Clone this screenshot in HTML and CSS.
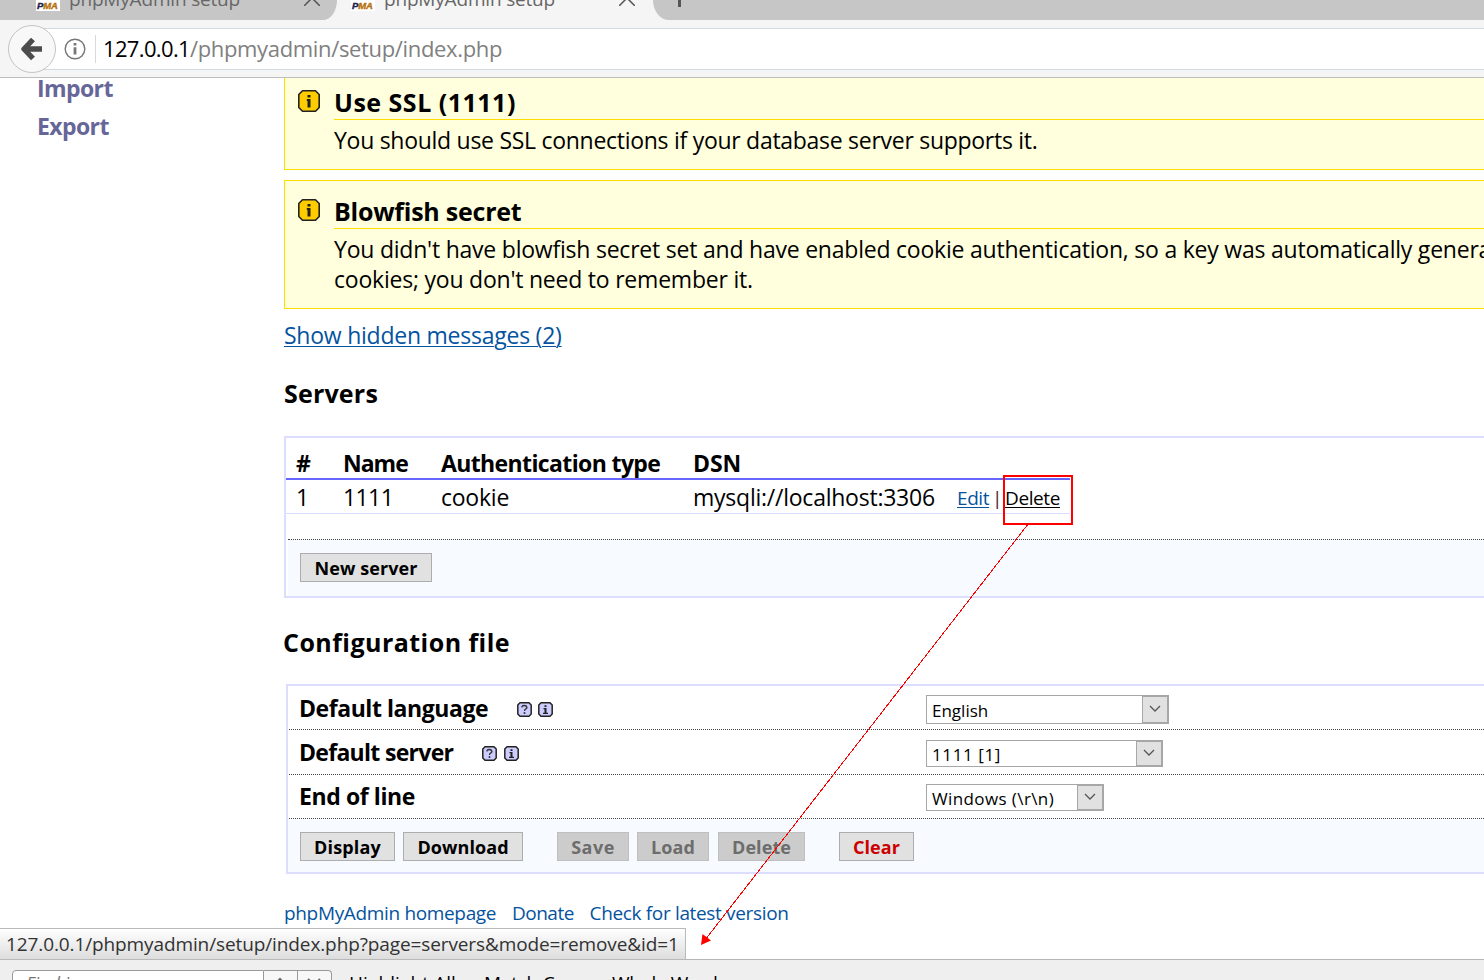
FILE: index.html
```
<!DOCTYPE html>
<html lang="en">
<head>
<meta charset="utf-8">
<title>phpMyAdmin setup</title>
<link rel="stylesheet" href="styles.css">
</head>
<body>
<svg class="defs" width="0" height="0">
  <symbol id="notice" viewBox="0 0 22 22">
    <path d="M4.500 .8h13L21.200 4.500v13L17.500 21.200h-13L.8 17.500v-13z" fill="#fc0" stroke="#222" stroke-width="1.600" stroke-linejoin="round"/>
    <path d="M9.500 5h3v2.500h-3zM8.800 9h3.700v8.500h-3V11h-.7z" fill="#222"/>
  </symbol>
  <symbol id="help" viewBox="0 0 15 15">
    <path d="M3 .8h9L14.200 3v9L12 14.200H3L.8 12V3z" fill="#ccf" stroke="#222" stroke-width="1.500" stroke-linejoin="round"/>
    <path d="M5 5.500V4.500Q5.500 3.500 7.500 3.500T10 5.500Q10 6.500 8.500 7.200Q7.500 7.700 7.500 9" fill="none" stroke="#333" stroke-width="1.300"/>
    <path d="M6.700 10.200h1.600v1.700H6.700z" fill="#222"/>
  </symbol>
  <symbol id="info" viewBox="0 0 15 15">
    <path d="M3 .8h9L14.200 3v9L12 14.200H3L.8 12V3z" fill="#ccf" stroke="#222" stroke-width="1.500" stroke-linejoin="round"/>
    <path d="M6.500 3.200h2v1.700h-2zM5.500 6h3v4.700h1.500V12H5v-1.300h1.500V7.200h-1z" fill="#222"/>
  </symbol>
  <symbol id="close" viewBox="0 0 16 16"><path d="M0 0L16 16M16 0L0 16" stroke="#555" stroke-width="1.500" fill="none"/></symbol>
</svg>

<div class="tabs">
  <div class="tab tab-first">
    <span class="favicon"><i>P</i><b>MA</b></span><span class="tab-title">phpMyAdmin setup</span>
    <svg class="tab-close"><use href="#close"/></svg>
  </div>
  <div class="tab tab-active">
    <span class="favicon"><i>P</i><b>MA</b></span><span class="tab-title">phpMyAdmin setup</span>
    <svg class="tab-close"><use href="#close"/></svg>
  </div>
  <div class="tab-new"><span class="plus"></span></div>
</div>

<div class="nav">
  <div class="back">
    <svg width="22" height="24" viewBox="0 0 22 24"><path d="M12 2.500L3 12l9 9.500M3 12h18" fill="none" stroke="#4c4c4c" stroke-width="5.400" stroke-linejoin="round"/></svg>
  </div>
  <div class="urlbar">
    <svg class="site-info" width="22" height="22" viewBox="0 0 22 22"><circle cx="11" cy="11" r="9.800" fill="none" stroke="#777" stroke-width="1.400"/><path d="M9.600 5h2.800v2.600H9.600zM9.600 9.200h2.800v7.300H9.600z" fill="#777"/></svg>
    <span class="url"><span class="host">127.0.0.1</span>/phpmyadmin/setup/index.php</span>
  </div>
</div>

<div class="page">
  <div class="side"><a>Import</a><a>Export</a></div>
  <div class="main">
    <div class="msg msg-ssl">
      <svg class="msg-icon"><use href="#notice"/></svg>
      <div class="msg-body">
        <h4 class="ls-ssl">Use SSL (1111)</h4>
        <p>You should use SSL connections if your database server supports it.</p>
      </div>
    </div>
    <div class="msg">
      <svg class="msg-icon"><use href="#notice"/></svg>
      <div class="msg-body">
        <h4 class="ls-blow">Blowfish secret</h4>
        <p>You didn't have blowfish secret set and have enabled cookie authentication, so a key was automatically generated for you.<br>cookies; you don't need to remember it.</p>
      </div>
    </div>
    <a class="hidden-link">Show hidden messages (2)</a>
    <h2 class="h-servers">Servers</h2>
    <div class="servers">
      <div class="row head"><span>#</span><span class="ls-name">Name</span><span>Authentication type</span><span class="ls-dsn">DSN</span><span></span></div>
      <div class="row"><span>1</span><span class="ls-ones">1111</span><span>cookie</span><span>mysqli://localhost:3306</span><span class="actions"><a>Edit</a><em>|</em><a class="del">Delete</a></span></div>
      <div class="buttons"><button>New server</button></div>
    </div>
    <h2 class="h-config">Configuration file</h2>
    <div class="config">
      <div class="opt opt-lang"><label class="ls-lang">Default language</label><svg><use href="#help"/></svg><svg><use href="#info"/></svg><div class="select sel-lang"><span>English</span><i><svg viewBox="0 0 12 8"><path d="M1 1l5 5 5-5"/></svg></i></div></div>
      <div class="opt opt-server"><label class="ls-server">Default server</label><svg><use href="#help"/></svg><svg><use href="#info"/></svg><div class="select sel-server"><span>1111 [1]</span><i><svg viewBox="0 0 12 8"><path d="M1 1l5 5 5-5"/></svg></i></div></div>
      <div class="opt opt-eol"><label class="ls-eol">End of line</label><div class="select sel-eol"><span>Windows (\r\n)</span><i><svg viewBox="0 0 12 8"><path d="M1 1l5 5 5-5"/></svg></i></div></div>
      <div class="buttons">
        <button class="b-display">Display</button><button class="b-download">Download</button>
        <button class="b-save" disabled>Save</button><button class="b-load" disabled>Load</button><button class="b-delete" disabled>Delete</button>
        <button class="b-clear">Clear</button>
      </div>
    </div>
    <div class="footer"><a class="f-home">phpMyAdmin homepage</a><a class="f-donate">Donate</a><a class="f-check">Check for latest version</a></div>
  </div>
</div>

<div class="findbar">
  <div class="find-input">Find in page</div><div class="find-btn"><svg width="14" height="12" viewBox="0 0 14 12"><path d="M1 8l6-6 6 6"/></svg></div><div class="find-btn find-last"><svg width="14" height="12" viewBox="0 0 14 12"><path d="M1 2l6 6 6-6"/></svg></div>
  <span class="f-high">Highlight All</span><span class="f-match">Match Case</span><span class="f-whole">Whole Words</span>
</div>
<div class="status">127.0.0.1/phpmyadmin/setup/index.php?page=servers&amp;mode=remove&amp;id=1</div>

<svg class="annotation" width="1484" height="980">
  <rect x="1004" y="476" width="68" height="48" fill="none" stroke="#f00" stroke-width="2"/>
  <path d="M1028.500 523.500L705 940" stroke="#f00" stroke-width="1" shape-rendering="crispEdges"/>
  <path d="M701 945l1.500-11 8.500 6.500z" fill="#f00"/>
</svg>
</body>
</html>
```
FILE: styles.css
```
* { box-sizing: border-box; }
body {
  margin: 0; width: 1484px; height: 980px; overflow: hidden; position: relative;
  display: flex; flex-direction: column; background: #fff; color: #000;
  font: 23px/30px "Open Sans", "Noto Sans", sans-serif;
}
.defs { position: absolute; }
h2, h4, p { margin: 0; }
a { color: #0453a0; }

/* browser tabs */
.tabs { display: flex; height: 20px; background: #f5f5f5; overflow: hidden; flex: none; }
.tab { display: flex; height: 20px; flex: none; overflow: hidden; }
.tab-first { width: 337px; padding-left: 36px; background: #c6c6c6; border-bottom-right-radius: 14px 20px; }
.tab-active { width: 316px; padding-left: 14px; background: #f5f5f5; }
.favicon {
  width: 24px; height: 11px; background: #fff; overflow: hidden; flex: none;
  font: italic bold 9.500px/12px "Liberation Sans", sans-serif; letter-spacing: -0.1px; padding-left: 1px;
  -webkit-text-stroke: 0.4px;
}
.favicon i { color: #225; }
.favicon b { color: #b8700c; }
.tab-title { width: 235px; margin: -17px 0 0 9px; font-size: 19px; line-height: 32px; letter-spacing: -0.18px; color: #666; }
.tab-close { width: 16px; height: 16px; margin-top: -10px; flex: none; }
.tab-new { flex: 1; background: #c6c6c6; border-bottom-left-radius: 16px 20px; }
.plus { display: block; width: 3px; height: 7px; margin-left: 25px; background: #555; }

/* address bar */
.nav { display: flex; height: 58px; flex: none; background: #f5f5f5; border-bottom: 1px solid #bdbdbd; padding: 5px 0 0 8px; }
.back {
  width: 48px; height: 48px; border: 1px solid #c4c4c4; border-radius: 50%; background: #f8f8f8;
  display: flex; align-items: center; justify-content: center; flex: none; z-index: 1;
}
.urlbar {
  flex: 1; height: 42px; margin: 3px 0 0 -20px; background: #fff; padding-left: 28px;
  border: solid #d2dae2; border-width: 1px 0; display: flex; align-items: center;
}
.url { font-size: 22px; letter-spacing: -0.34px; color: #808080; margin-left: 9px; padding-left: 7px; border-left: 1px solid #d9d9d9; height: 28px; line-height: 27px; white-space: nowrap; }
.host { color: #000; letter-spacing: -0.65px; }

/* page content */
.page { display: flex; flex: 1; min-height: 0; overflow: hidden; }
.side { width: 284px; flex: none; padding-left: 37px; display: flex; flex-direction: column; gap: 8px; margin-top: -5px; font-size: 23px; letter-spacing: -0.6px; font-weight: 700; }
.side a { color: #669; }
.main { flex: 1; min-width: 0; }
.msg { display: flex; height: 129px; margin-bottom: 10px; margin-right: -10px; border: 1px solid #fd0; background: #ffd; padding: 16px 0 0 13px; overflow: hidden; }
.msg-ssl { height: 92px; border-top: 0; padding-top: 8px; }
.msg-icon { width: 22px; height: 22px; margin: 2px 14px 0 0; flex: none; }
.msg-ssl .msg-icon { margin-top: 4px; }
.msg-body { flex: 1; }
.msg h4 { height: 32px; border-bottom: 1px solid #fd0; font-size: 25px; line-height: 29px; }
.msg-ssl h4 { height: 34px; line-height: 33px; }
.msg p { margin-top: 5px; letter-spacing: -0.22px; white-space: nowrap; }
.msg-ssl p { letter-spacing: -0.28px; }
.msg h4.ls-ssl { letter-spacing: 0.5px; }
.msg h4.ls-blow { letter-spacing: -0.24px; }
.hidden-link { display: block; width: max-content; margin-top: 11px; letter-spacing: -0.24px; text-decoration: underline; text-decoration-thickness: 1px; text-underline-offset: 2px; }
h2 { font-size: 25px; line-height: 34px; }
.h-servers { margin-top: 26px; letter-spacing: 0.19px; }
.h-config { margin: 27px 0 0 -1px; letter-spacing: 0.46px; }

.servers { height: 162px; margin: 26px -10px 0 0; border: 2px solid #ddf; padding-top: 10px; display: flex; flex-direction: column; }
.row { display: grid; grid-template-columns: 47px 98px 252px 264px 124px; width: 784px; height: 34px; padding-left: 10px; border-bottom: 1px solid #ddf; line-height: 34px; letter-spacing: -0.24px; white-space: nowrap; }
.head { height: 32px; border-bottom: 2px solid #66f; font-size: 23px; font-weight: 700; line-height: 30px; letter-spacing: -0.62px; }
.row .ls-name { letter-spacing: -1px; }
.row .ls-dsn { letter-spacing: -0.1px; }
.row .ls-ones { letter-spacing: -0.6px; }
.actions { font-size: 19px; line-height: 37px; letter-spacing: -0.42px; }
.actions a { text-decoration: underline; text-decoration-thickness: 1px; text-underline-offset: 2px; }
.actions em { font-style: normal; display: inline-block; width: 16px; text-align: center; color: #422; }
.actions .del { color: #000; }
.buttons { display: flex; background: #f7fbff; padding: 13px 0 0 12px; flex: 1; }
.servers .buttons { margin: 25px 0 0 2px; border-top: 1px dotted #444; }
button { height: 29px; border: 1px solid #adadad; background: #e1e1e1; padding: 2px 0 0; font: bold 18px/25px "Open Sans", sans-serif; color: #000; width: 132px; flex: none; letter-spacing: 0.08px; }
button:disabled { background: #ccc; border-color: #bfbfbf; color: #6d6d6d; }

.config { height: 190px; margin: 25px -10px 0 2px; border: 2px solid #ddf; display: flex; flex-direction: column; }
.opt { display: flex; height: 44px; flex: none; margin-left: 1px; padding-left: 10px; border-bottom: 1px dotted #444; position: relative; font-weight: 700; }
.opt > svg { width: 15px; height: 15px; margin: 16px 6px 0 0; flex: none; }
.opt-server > svg { margin-right: 7px; }
.opt label { width: 218px; }
.opt-server label { width: 183px; }
.opt-eol label { width: 400px; }
.opt-lang { line-height: 45px; }
.opt-server { height: 45px; line-height: 45px; }
.opt-eol { line-height: 43px; }
.ls-lang { letter-spacing: -0.44px; }
.ls-server { letter-spacing: -0.7px; }
.ls-eol { letter-spacing: -0.4px; }
.select { position: absolute; left: 637px; top: 10px; height: 27px; border: 1px solid #a7a7a7; background: #fff; display: flex; font: 17px/27px "Open Sans", sans-serif; white-space: nowrap; }
.select span { flex: 1; padding-left: 5px; }
.select i { width: 26px; background: #e1e1e1; border: 1px solid #a7a7a7; display: flex; align-items: center; justify-content: center; }
.select i svg { width: 12px; height: 8px; margin: -2px 1px 0 0; fill: none; stroke: #555; stroke-width: 1.300; }
.sel-lang { width: 243px; height: 29px; top: 9px; line-height: 29px; }
.sel-server { width: 237px; letter-spacing: 0.6px; }
.sel-eol { width: 178px; top: 9px; letter-spacing: 0.39px; }
button.b-display { width: 95px; margin-right: 8px; letter-spacing: 0.18px; }
.b-download { width: 120px; margin-right: 34px; }
button.b-save { width: 72px; margin-right: 8px; letter-spacing: 0.5px; }
.b-load { width: 72px; margin-right: 9px; }
.b-delete { width: 87px; margin-right: 34px; }
.b-clear { width: 75px; color: #c00; }

.footer { display: flex; margin-top: 24px; font-size: 19px; letter-spacing: -0.34px; white-space: nowrap; }
.f-home { width: 228px; }
.f-donate { width: 77.500px; letter-spacing: -0.5px; }

/* find bar and link preview */
.findbar { display: flex; height: 21px; flex: none; background: #efefef; border-top: 1px solid #b5b5b5; padding: 10px 0 0 12px; overflow: hidden; font-size: 19px; line-height: 26px; white-space: nowrap; }
.find-input { width: 252px; height: 30px; border: 1px solid #999; border-radius: 4px 0 0 0; background: #fff; padding-left: 13px; color: #777; font-style: italic; font-size: 18px; line-height: 24px; }
.find-btn { width: 34px; height: 30px; border: 1px solid #999; border-left: 0; background: #f7f7f7; padding: 6px 0 0 9px; line-height: 0; }
.find-btn svg { fill: none; stroke: #666; stroke-width: 2; }
.find-last { border-top-right-radius: 4px; }
.f-high { margin-left: 17px; width: 135px; letter-spacing: 0.1px; }
.f-match { width: 128px; letter-spacing: -0.24px; }
.f-whole { letter-spacing: -0.4px; }
.status { position: absolute; left: 0; top: 928px; width: 686px; height: 32px; padding-left: 6px; font-size: 19px; line-height: 31px; letter-spacing: -0.11px; color: #333; background: linear-gradient(#fff, #ddd); border: solid #b9b9b9; border-width: 1px 1px 1px 0; white-space: nowrap; }
.annotation { position: absolute; left: 0; top: 0; pointer-events: none; }
```
